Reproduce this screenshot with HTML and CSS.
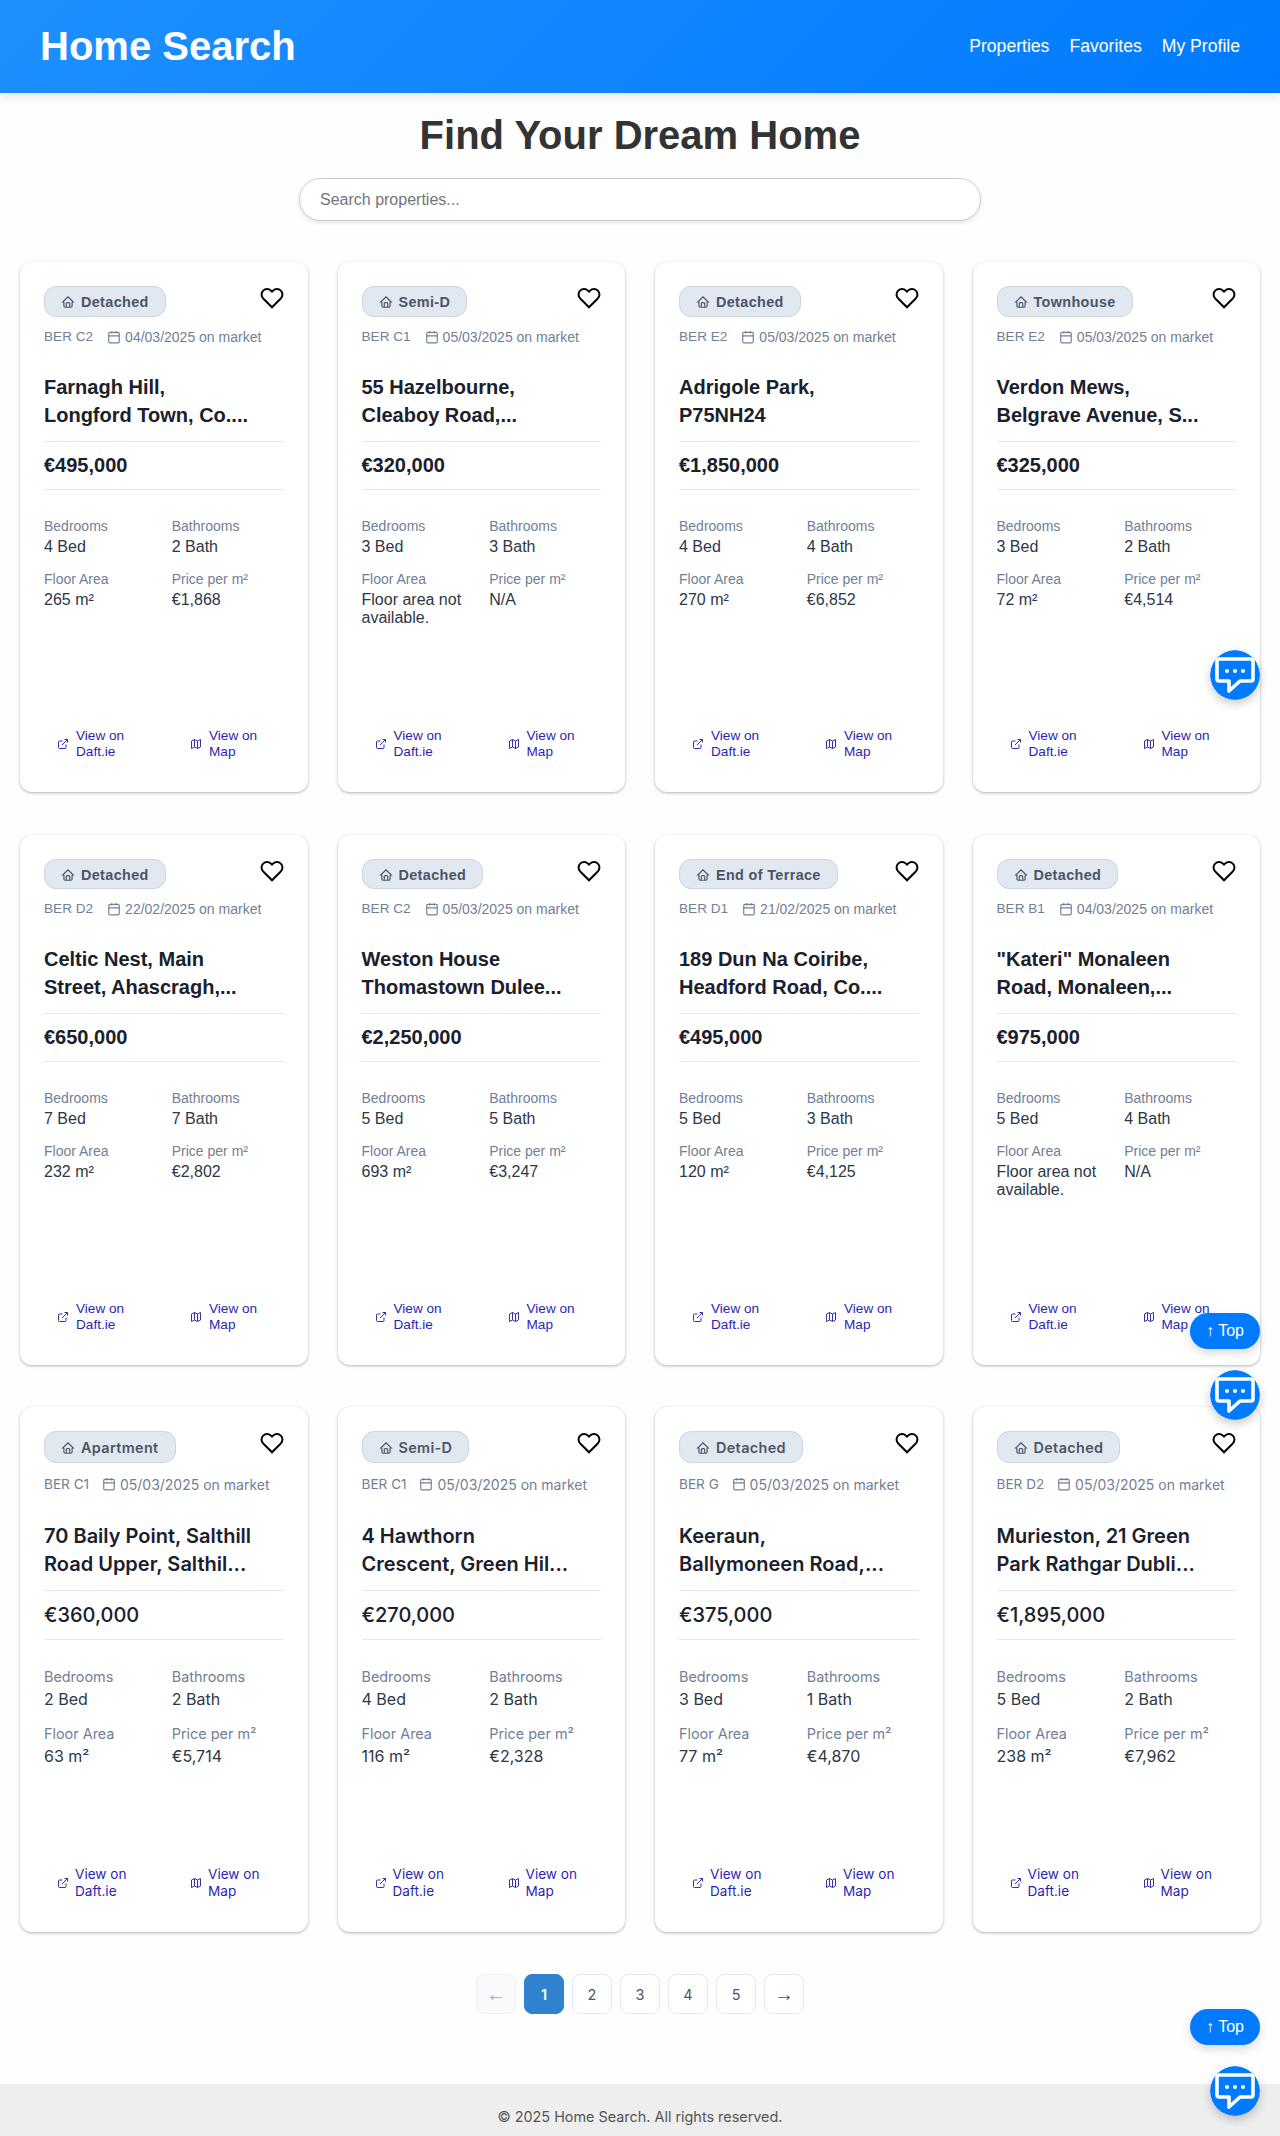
FILE: index.html
```html
<!DOCTYPE html>
<html lang="en">
<head>
    <meta charset="UTF-8">
    <meta name="viewport" content="width=device-width, initial-scale=1.0">
    <title>Home Search</title>
    <link rel="stylesheet" href="styles.css">
</head>
<body>
    <svg class="icon-defs" width="0" height="0" aria-hidden="true">
        <symbol id="i-home" viewBox="0 0 24 24"><path d="M5 12H3l9-9 9 9h-2M5 12v7a2 2 0 0 0 2 2h10a2 2 0 0 0 2-2v-7M9 21v-6a2 2 0 0 1 2-2h2a2 2 0 0 1 2 2v6"/></symbol>
        <symbol id="i-cal" viewBox="0 0 24 24"><rect x="3" y="4" width="18" height="18" rx="2"/><path d="M16 2v4M8 2v4M3 10h18"/></symbol>
        <symbol id="i-heart" viewBox="0 0 24 24"><path d="M20.84 4.61a5.5 5.5 0 0 0-7.78 0L12 5.67l-1.06-1.06a5.5 5.5 0 0 0-7.78 7.78l1.06 1.06L12 21.23l7.78-7.78 1.06-1.06a5.5 5.5 0 0 0 0-7.78z"/></symbol>
        <symbol id="i-ext" viewBox="0 0 24 24"><path d="M18 13v6a2 2 0 0 1-2 2H5a2 2 0 0 1-2-2V8a2 2 0 0 1 2-2h6M15 3h6v6M10 14 21 3"/></symbol>
        <symbol id="i-map" viewBox="0 0 24 24"><path d="M3 6l6-3 6 3 6-3v15l-6 3-6-3-6 3zM9 3v15M15 6v15"/></symbol>
        <symbol id="i-chat" viewBox="0 0 50 50"><circle cx="25" cy="25" r="25" fill="#007bff"/><path d="M9 9H41a2 2 0 0 1 2 2V29a2 2 0 0 1-2 2H30L19 41V31H9a2 2 0 0 1-2-2V11a2 2 0 0 1 2-2Z" fill="#007bff" stroke="#fff" stroke-width="3.6" stroke-linejoin="round"/><circle cx="17" cy="21" r="2" fill="#fff"/><circle cx="25" cy="21" r="2" fill="#fff"/><circle cx="33" cy="21" r="2" fill="#fff"/></symbol>
    </svg>

    <header class="site-header">
        <h1>Home Search</h1>
        <nav class="site-nav">
            <a href="#">Properties</a>
            <a href="#">Favorites</a>
            <a href="#">My Profile</a>
        </nav>
    </header>

    <main class="content">
        <h2 class="page-title">Find Your Dream Home</h2>
        <input class="search" type="text" placeholder="Search properties...">

        <div class="card-grid">
            <!-- row 1 -->
            <article class="card">
                <div class="card-top"><span class="badge"><svg class="ic-badge"><use href="#i-home"/></svg>Detached</span><svg class="ic-heart"><use href="#i-heart"/></svg></div>
                <div class="meta"><span>BER C2</span><span class="date"><svg class="ic-cal"><use href="#i-cal"/></svg>04/03/2025 on market</span></div>
                <h3 class="card-title"><span>Farnagh Hill, Longford Town, Co....</span></h3>
                <div class="price">€495,000</div>
                <div class="specs">
                    <div><div class="label">Bedrooms</div><div class="value">4 Bed</div></div>
                    <div><div class="label">Bathrooms</div><div class="value">2 Bath</div></div>
                    <div><div class="label">Floor Area</div><div class="value">265 m²</div></div>
                    <div><div class="label">Price per m²</div><div class="value">€1,868</div></div>
                </div>
                <div class="links"><a href="#"><svg class="ic-link"><use href="#i-ext"/></svg><span>View on Daft.ie</span></a><a href="#"><svg class="ic-link"><use href="#i-map"/></svg><span>View on Map</span></a></div>
            </article>
            <article class="card">
                <div class="card-top"><span class="badge"><svg class="ic-badge"><use href="#i-home"/></svg>Semi-D</span><svg class="ic-heart"><use href="#i-heart"/></svg></div>
                <div class="meta"><span>BER C1</span><span class="date"><svg class="ic-cal"><use href="#i-cal"/></svg>05/03/2025 on market</span></div>
                <h3 class="card-title"><span>55 Hazelbourne, Cleaboy Road,...</span></h3>
                <div class="price">€320,000</div>
                <div class="specs">
                    <div><div class="label">Bedrooms</div><div class="value">3 Bed</div></div>
                    <div><div class="label">Bathrooms</div><div class="value">3 Bath</div></div>
                    <div><div class="label">Floor Area</div><div class="value">Floor area not available.</div></div>
                    <div><div class="label">Price per m²</div><div class="value">N/A</div></div>
                </div>
                <div class="links"><a href="#"><svg class="ic-link"><use href="#i-ext"/></svg><span>View on Daft.ie</span></a><a href="#"><svg class="ic-link"><use href="#i-map"/></svg><span>View on Map</span></a></div>
            </article>
            <article class="card">
                <div class="card-top"><span class="badge"><svg class="ic-badge"><use href="#i-home"/></svg>Detached</span><svg class="ic-heart"><use href="#i-heart"/></svg></div>
                <div class="meta"><span>BER E2</span><span class="date"><svg class="ic-cal"><use href="#i-cal"/></svg>05/03/2025 on market</span></div>
                <h3 class="card-title"><span>Adrigole Park, P75NH24</span></h3>
                <div class="price">€1,850,000</div>
                <div class="specs">
                    <div><div class="label">Bedrooms</div><div class="value">4 Bed</div></div>
                    <div><div class="label">Bathrooms</div><div class="value">4 Bath</div></div>
                    <div><div class="label">Floor Area</div><div class="value">270 m²</div></div>
                    <div><div class="label">Price per m²</div><div class="value">€6,852</div></div>
                </div>
                <div class="links"><a href="#"><svg class="ic-link"><use href="#i-ext"/></svg><span>View on Daft.ie</span></a><a href="#"><svg class="ic-link"><use href="#i-map"/></svg><span>View on Map</span></a></div>
            </article>
            <article class="card">
                <div class="card-top"><span class="badge"><svg class="ic-badge"><use href="#i-home"/></svg>Townhouse</span><svg class="ic-heart"><use href="#i-heart"/></svg></div>
                <div class="meta"><span>BER E2</span><span class="date"><svg class="ic-cal"><use href="#i-cal"/></svg>05/03/2025 on market</span></div>
                <h3 class="card-title"><span>Verdon Mews, Belgrave Avenue, S...</span></h3>
                <div class="price">€325,000</div>
                <div class="specs">
                    <div><div class="label">Bedrooms</div><div class="value">3 Bed</div></div>
                    <div><div class="label">Bathrooms</div><div class="value">2 Bath</div></div>
                    <div><div class="label">Floor Area</div><div class="value">72 m²</div></div>
                    <div><div class="label">Price per m²</div><div class="value">€4,514</div></div>
                </div>
                <div class="links"><a href="#"><svg class="ic-link"><use href="#i-ext"/></svg><span>View on Daft.ie</span></a><a href="#"><svg class="ic-link"><use href="#i-map"/></svg><span>View on Map</span></a></div>
            </article>

            <!-- row 2 -->
            <article class="card">
                <div class="card-top"><span class="badge"><svg class="ic-badge"><use href="#i-home"/></svg>Detached</span><svg class="ic-heart"><use href="#i-heart"/></svg></div>
                <div class="meta"><span>BER D2</span><span class="date"><svg class="ic-cal"><use href="#i-cal"/></svg>22/02/2025 on market</span></div>
                <h3 class="card-title"><span>Celtic Nest, Main Street, Ahascragh,...</span></h3>
                <div class="price">€650,000</div>
                <div class="specs">
                    <div><div class="label">Bedrooms</div><div class="value">7 Bed</div></div>
                    <div><div class="label">Bathrooms</div><div class="value">7 Bath</div></div>
                    <div><div class="label">Floor Area</div><div class="value">232 m²</div></div>
                    <div><div class="label">Price per m²</div><div class="value">€2,802</div></div>
                </div>
                <div class="links"><a href="#"><svg class="ic-link"><use href="#i-ext"/></svg><span>View on Daft.ie</span></a><a href="#"><svg class="ic-link"><use href="#i-map"/></svg><span>View on Map</span></a></div>
            </article>
            <article class="card">
                <div class="card-top"><span class="badge"><svg class="ic-badge"><use href="#i-home"/></svg>Detached</span><svg class="ic-heart"><use href="#i-heart"/></svg></div>
                <div class="meta"><span>BER C2</span><span class="date"><svg class="ic-cal"><use href="#i-cal"/></svg>05/03/2025 on market</span></div>
                <h3 class="card-title"><span>Weston House Thomastown Dulee...</span></h3>
                <div class="price">€2,250,000</div>
                <div class="specs">
                    <div><div class="label">Bedrooms</div><div class="value">5 Bed</div></div>
                    <div><div class="label">Bathrooms</div><div class="value">5 Bath</div></div>
                    <div><div class="label">Floor Area</div><div class="value">693 m²</div></div>
                    <div><div class="label">Price per m²</div><div class="value">€3,247</div></div>
                </div>
                <div class="links"><a href="#"><svg class="ic-link"><use href="#i-ext"/></svg><span>View on Daft.ie</span></a><a href="#"><svg class="ic-link"><use href="#i-map"/></svg><span>View on Map</span></a></div>
            </article>
            <article class="card">
                <div class="card-top"><span class="badge"><svg class="ic-badge"><use href="#i-home"/></svg>End of Terrace</span><svg class="ic-heart"><use href="#i-heart"/></svg></div>
                <div class="meta"><span>BER D1</span><span class="date"><svg class="ic-cal"><use href="#i-cal"/></svg>21/02/2025 on market</span></div>
                <h3 class="card-title"><span>189 Dun Na Coiribe, Headford Road, Co....</span></h3>
                <div class="price">€495,000</div>
                <div class="specs">
                    <div><div class="label">Bedrooms</div><div class="value">5 Bed</div></div>
                    <div><div class="label">Bathrooms</div><div class="value">3 Bath</div></div>
                    <div><div class="label">Floor Area</div><div class="value">120 m²</div></div>
                    <div><div class="label">Price per m²</div><div class="value">€4,125</div></div>
                </div>
                <div class="links"><a href="#"><svg class="ic-link"><use href="#i-ext"/></svg><span>View on Daft.ie</span></a><a href="#"><svg class="ic-link"><use href="#i-map"/></svg><span>View on Map</span></a></div>
            </article>
            <article class="card">
                <div class="card-top"><span class="badge"><svg class="ic-badge"><use href="#i-home"/></svg>Detached</span><svg class="ic-heart"><use href="#i-heart"/></svg></div>
                <div class="meta"><span>BER B1</span><span class="date"><svg class="ic-cal"><use href="#i-cal"/></svg>04/03/2025 on market</span></div>
                <h3 class="card-title"><span>"Kateri" Monaleen Road, Monaleen,...</span></h3>
                <div class="price">€975,000</div>
                <div class="specs">
                    <div><div class="label">Bedrooms</div><div class="value">5 Bed</div></div>
                    <div><div class="label">Bathrooms</div><div class="value">4 Bath</div></div>
                    <div><div class="label">Floor Area</div><div class="value">Floor area not available.</div></div>
                    <div><div class="label">Price per m²</div><div class="value">N/A</div></div>
                </div>
                <div class="links"><a href="#"><svg class="ic-link"><use href="#i-ext"/></svg><span>View on Daft.ie</span></a><a href="#"><svg class="ic-link"><use href="#i-map"/></svg><span>View on Map</span></a></div>
            </article>

            <!-- row 3 -->
            <article class="card card-inter">
                <div class="card-top"><span class="badge"><svg class="ic-badge"><use href="#i-home"/></svg>Apartment</span><svg class="ic-heart"><use href="#i-heart"/></svg></div>
                <div class="meta"><span>BER C1</span><span class="date"><svg class="ic-cal"><use href="#i-cal"/></svg>05/03/2025 on market</span></div>
                <h3 class="card-title"><span>70 Baily Point, Salthill Road Upper, Salthil...</span></h3>
                <div class="price">€360,000</div>
                <div class="specs">
                    <div><div class="label">Bedrooms</div><div class="value">2 Bed</div></div>
                    <div><div class="label">Bathrooms</div><div class="value">2 Bath</div></div>
                    <div><div class="label">Floor Area</div><div class="value">63 m²</div></div>
                    <div><div class="label">Price per m²</div><div class="value">€5,714</div></div>
                </div>
                <div class="links"><a href="#"><svg class="ic-link"><use href="#i-ext"/></svg><span>View on Daft.ie</span></a><a href="#"><svg class="ic-link"><use href="#i-map"/></svg><span>View on Map</span></a></div>
            </article>
            <article class="card card-inter">
                <div class="card-top"><span class="badge"><svg class="ic-badge"><use href="#i-home"/></svg>Semi-D</span><svg class="ic-heart"><use href="#i-heart"/></svg></div>
                <div class="meta"><span>BER C1</span><span class="date"><svg class="ic-cal"><use href="#i-cal"/></svg>05/03/2025 on market</span></div>
                <h3 class="card-title"><span>4 Hawthorn Crescent, Green Hil...</span></h3>
                <div class="price">€270,000</div>
                <div class="specs">
                    <div><div class="label">Bedrooms</div><div class="value">4 Bed</div></div>
                    <div><div class="label">Bathrooms</div><div class="value">2 Bath</div></div>
                    <div><div class="label">Floor Area</div><div class="value">116 m²</div></div>
                    <div><div class="label">Price per m²</div><div class="value">€2,328</div></div>
                </div>
                <div class="links"><a href="#"><svg class="ic-link"><use href="#i-ext"/></svg><span>View on Daft.ie</span></a><a href="#"><svg class="ic-link"><use href="#i-map"/></svg><span>View on Map</span></a></div>
            </article>
            <article class="card card-inter">
                <div class="card-top"><span class="badge"><svg class="ic-badge"><use href="#i-home"/></svg>Detached</span><svg class="ic-heart"><use href="#i-heart"/></svg></div>
                <div class="meta"><span>BER G</span><span class="date"><svg class="ic-cal"><use href="#i-cal"/></svg>05/03/2025 on market</span></div>
                <h3 class="card-title"><span>Keeraun, Ballymoneen Road,...</span></h3>
                <div class="price">€375,000</div>
                <div class="specs">
                    <div><div class="label">Bedrooms</div><div class="value">3 Bed</div></div>
                    <div><div class="label">Bathrooms</div><div class="value">1 Bath</div></div>
                    <div><div class="label">Floor Area</div><div class="value">77 m²</div></div>
                    <div><div class="label">Price per m²</div><div class="value">€4,870</div></div>
                </div>
                <div class="links"><a href="#"><svg class="ic-link"><use href="#i-ext"/></svg><span>View on Daft.ie</span></a><a href="#"><svg class="ic-link"><use href="#i-map"/></svg><span>View on Map</span></a></div>
            </article>
            <article class="card card-inter">
                <div class="card-top"><span class="badge"><svg class="ic-badge"><use href="#i-home"/></svg>Detached</span><svg class="ic-heart"><use href="#i-heart"/></svg></div>
                <div class="meta"><span>BER D2</span><span class="date"><svg class="ic-cal"><use href="#i-cal"/></svg>05/03/2025 on market</span></div>
                <h3 class="card-title"><span>Murieston, 21 Green Park Rathgar Dubli...</span></h3>
                <div class="price">€1,895,000</div>
                <div class="specs">
                    <div><div class="label">Bedrooms</div><div class="value">5 Bed</div></div>
                    <div><div class="label">Bathrooms</div><div class="value">2 Bath</div></div>
                    <div><div class="label">Floor Area</div><div class="value">238 m²</div></div>
                    <div><div class="label">Price per m²</div><div class="value">€7,962</div></div>
                </div>
                <div class="links"><a href="#"><svg class="ic-link"><use href="#i-ext"/></svg><span>View on Daft.ie</span></a><a href="#"><svg class="ic-link"><use href="#i-map"/></svg><span>View on Map</span></a></div>
            </article>
        </div>

        <div class="pagination">
            <button class="page-btn arrow disabled">←</button>
            <button class="page-btn active">1</button>
            <button class="page-btn">2</button>
            <button class="page-btn">3</button>
            <button class="page-btn">4</button>
            <button class="page-btn">5</button>
            <button class="page-btn arrow">→</button>
        </div>
    </main>

    <footer class="site-footer">© 2025 Home Search. All rights reserved.</footer>

    <!-- floating buttons, stuck at the spots where the page was captured -->
    <svg class="chat chat-1"><use href="#i-chat"/></svg>
    <button class="to-top top-1">↑ Top</button>
    <svg class="chat chat-2"><use href="#i-chat"/></svg>
    <button class="to-top top-2">↑ Top</button>
    <svg class="chat chat-3"><use href="#i-chat"/></svg>
</body>
</html>
```

FILE: styles.css
```css
* {
    box-sizing: border-box;
}
body {
    position: relative;
    margin: 0;
    height: 2136px;
    overflow: hidden;
    background: #fefefe;
    font-family: "Liberation Sans", Arial, sans-serif;
}
.icon-defs {
    position: absolute;
}
.site-header {
    display: flex;
    justify-content: space-between;
    align-items: center;
    height: 93px;
    padding: 0 40px;
    background: linear-gradient(135deg, #1e90ff, #007bff);
    box-shadow: 0 4px 10px rgba(0, 0, 0, 0.1);
}
.site-header h1 {
    margin: 0;
    color: #fff;
    font-size: 40px;
    font-weight: bold;
}
.site-nav {
    display: flex;
    gap: 20px;
}
.site-nav a {
    color: #fff;
    font-size: 17.6px;
    text-decoration: none;
}
.content {
    display: flex;
    flex-direction: column;
    align-items: center;
    padding: 0 20px;
}
.page-title {
    margin: 20px 0 0;
    color: #333;
    font-size: 40px;
    font-weight: bold;
}
.search {
    width: 682px;
    height: 43px;
    margin-top: 20px;
    padding: 0 20px;
    border: 1px solid #ccc;
    border-radius: 25px;
    box-shadow: 0 2px 4px rgba(0, 0, 0, 0.1);
    font-family: inherit;
    font-size: 16px;
}
.search::placeholder {
    color: #757575;
}
.card-grid {
    display: grid;
    grid-template-columns: repeat(4, minmax(0, 1fr));
    grid-template-rows: 530px 530px 525px;
    gap: 42.5px 30px;
    width: 100%;
    margin-top: 41px;
}
.card {
    display: flex;
    flex-direction: column;
    padding: 24px;
    border-radius: 12px;
    background: #fff;
    box-shadow: 0 1px 3px rgba(0, 0, 0, 0.3);
}
.card-inter {
    font-family: Inter, sans-serif;
}
.card-top {
    display: flex;
    justify-content: space-between;
    align-items: flex-start;
}
.badge {
    display: inline-flex;
    align-items: center;
    padding: 7.4px 16px 5.4px;
    border: 1px solid #cbd5e0;
    border-radius: 12px;
    background: #e2e8f0;
    color: #4a5568;
    font-size: 14.4px;
    font-weight: 600;
    letter-spacing: 0.025em;
}
.ic-badge {
    width: 14px;
    height: 14px;
    margin-right: 6px;
    fill: none;
    stroke: #4a5568;
    stroke-width: 2;
}
.ic-heart {
    width: 24px;
    height: 24px;
    fill: none;
    stroke: #000;
    stroke-width: 2;
}
.meta {
    display: flex;
    gap: 14px;
    margin-top: 12px;
    color: #718096;
    font-size: 13.6px;
}
.card-inter .meta {
    gap: 12.8px;
    margin-top: 13px;
}
.date {
    display: flex;
    align-items: center;
    gap: 4px;
    font-size: 14px;
}
.ic-cal {
    width: 14px;
    height: 14px;
    fill: none;
    stroke: #718096;
    stroke-width: 2;
}
.card-title {
    margin: 28px 0 0;
    padding-bottom: 12px;
    border-bottom: 1px solid #e2e8f0;
    color: #1a202c;
    font-size: 20px;
    font-weight: 600;
    line-height: 28px;
}
.card-inter .card-title {
    margin-top: 29px;
}
.card-title span {
    display: block;
    max-width: 208px;
}
.price {
    padding: 12px 0;
    border-bottom: 1px solid #e2e8f0;
    color: #1a202c;
    font-size: 20px;
    font-weight: 600;
}
.card-inter .price {
    font-weight: 500;
}
.specs {
    display: grid;
    grid-template-columns: 1fr 1fr;
    gap: 15px 16px;
    margin-top: 28px;
}
.card-inter .specs {
    gap: 16px;
}
.label {
    margin-bottom: 4px;
    color: #718096;
    font-size: 14px;
}
.card-inter .label {
    font-size: 14.4px;
}
.value {
    color: #2d3748;
    font-size: 16px;
}
.links {
    display: flex;
    margin-top: auto;
    padding: 0 0 8px 13px;
}
.links a {
    display: flex;
    align-items: center;
    gap: 7px;
    color: #2d1fb0;
    font-size: 13.6px;
    line-height: 16px;
    text-decoration: none;
}
.links a:first-child {
    width: 133px;
}
.card-inter .links a {
    gap: 6px;
    line-height: 17px;
}
.links a span {
    width: 60px;
}
.ic-link {
    width: 12px;
    height: 12px;
    flex: none;
    fill: none;
    stroke: #3730a3;
    stroke-width: 2;
}
.pagination {
    display: flex;
    gap: 8px;
    margin-top: 42px;
}
.page-btn {
    width: 40px;
    height: 40px;
    padding: 0;
    border: 1px solid #e2e8f0;
    border-radius: 8px;
    background: #fff;
    color: #4a5568;
    font-family: Inter, sans-serif;
    font-size: 14.4px;
}
.page-btn.arrow {
    font-family: "Liberation Sans", sans-serif;
    font-size: 20px;
}
.page-btn.active {
    border-color: #3182ce;
    background: #3182ce;
    color: #fff;
    font-weight: 600;
}
.page-btn.disabled {
    border-color: #edf2f7;
    background: #f8fafc;
    color: #a0aec0;
}
.site-footer {
    position: absolute;
    top: 2084px;
    left: 0;
    right: 0;
    height: 52px;
    padding-top: 24px;
    background: #eee;
    color: #555;
    font-family: Inter, sans-serif;
    font-size: 14.4px;
    text-align: center;
}
.chat {
    position: absolute;
    left: 1210px;
    width: 50px;
    height: 50px;
    border-radius: 50%;
    box-shadow: 0 4px 10px rgba(0, 0, 0, 0.2);
}
.chat-1 { top: 650px; }
.chat-2 { top: 1370px; }
.chat-3 { top: 2066px; }
.to-top {
    position: absolute;
    left: 1190px;
    width: 70px;
    height: 36px;
    padding: 0;
    border: none;
    border-radius: 18px;
    background: #007bff;
    box-shadow: 0 4px 10px rgba(0, 0, 0, 0.15);
    color: #fff;
    font-family: "Liberation Sans", sans-serif;
    font-size: 16px;
}
.top-1 { top: 1313px; }
.top-2 { top: 2009px; }
```
